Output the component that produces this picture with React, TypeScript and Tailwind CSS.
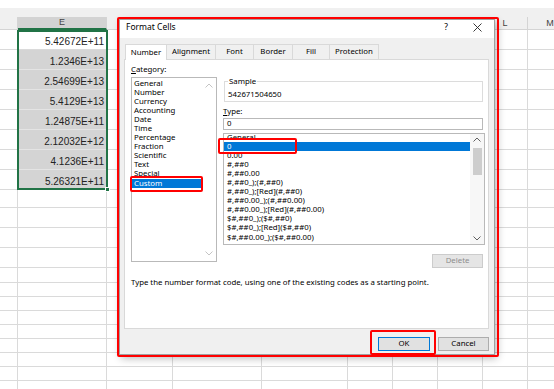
import React from 'react';

const cols = [
  { w: 'w-[18px]', name: '' },
  { w: 'w-[89px]', name: 'E' },
  { w: 'w-[66px]', name: '' },
  { w: 'w-[89px]', name: '' },
  { w: 'w-[86px]', name: '' },
  { w: 'w-[45px]', name: '' },
  { w: 'w-[45px]', name: '' },
  { w: 'w-[45px]', name: '' },
  { w: 'w-[45px]', name: 'L' },
  { w: 'w-[45px]', name: 'M' },
];

const rowHeights = [
  'h-[20px]', 'h-[20px]', 'h-[20px]', 'h-[20px]', 'h-[20px]', 'h-[20px]', 'h-[20px]',
  'h-[20px]', 'h-[18px]', 'h-[20px]', 'h-[20px]', 'h-[20px]', 'h-[15px]', 'h-[14px]',
  'h-[14px]', 'h-[14px]', 'h-[14px]', 'h-[14px]', 'h-[14px]', 'h-[14px]', 'h-[14px]',
];

const values = [
  '5.42672E+11',
  '1.2346E+13',
  '2.54699E+13',
  '5.4129E+13',
  '1.24875E+11',
  '2.12032E+12',
  '4.1236E+11',
  '5.26321E+11',
];

const categories = [
  'General', 'Number', 'Currency', 'Accounting', 'Date', 'Time',
  'Percentage', 'Fraction', 'Scientific', 'Text', 'Special', 'Custom',
];

const formats = [
  'General',
  '0',
  '0.00',
  '#,##0',
  '#,##0.00',
  '#,##0_);(#,##0)',
  '#,##0_);[Red](#,##0)',
  '#,##0.00_);(#,##0.00)',
  '#,##0.00_);[Red](#,##0.00)',
  '$#,##0_);($#,##0)',
  '$#,##0_);[Red]($#,##0)',
  '$#,##0.00_);($#,##0.00)',
];

const tabs = [
  { label: 'Number', w: 'w-[42px]' },
  { label: 'Alignment', w: 'w-[49px]' },
  { label: 'Font', w: 'w-[38px]' },
  { label: 'Border', w: 'w-[39px]' },
  { label: 'Fill', w: 'w-[37px]' },
  { label: 'Protection', w: 'w-[49px]' },
];

const Chevron: React.FC<{ up?: boolean; color: string }> = ({ up, color }) => (
  <svg width="8" height="5" viewBox="0 0 8 5">
    <path
      d={up ? 'M0.5 4.5 L4 1 L7.5 4.5' : 'M0.5 0.5 L4 4 L7.5 0.5'}
      fill="none"
      stroke={color}
      strokeWidth="1"
    />
  </svg>
);

const Sheet = () => (
  <div className="flex flex-col">
    <div className="h-[8px] bg-white" />
    <div className="h-[9px] bg-[#f0f0f0]" />
    <div className="flex h-[13px] bg-[#f0f0f0]">
      {cols.map((c, i) => (
        <div
          key={i}
          className={`${c.w} flex shrink-0 items-center justify-center border-r border-b border-[#d4d4d4] text-[9px] leading-none text-[#444] ${
            i === 1 ? 'bg-[#d3d3d3] !border-b-[#217346] border-b-2' : ''
          }`}
        >
          {c.name}
        </div>
      ))}
    </div>
    {rowHeights.map((h, r) => (
      <div key={r} className={`${h} flex shrink-0`}>
        {cols.map((c, i) => {
          const val = i === 1 ? values[r] : undefined;
          const selected = i === 1 && r > 0 && r < 8;
          return (
            <div
              key={i}
              className={`${c.w} flex shrink-0 items-end justify-end border-r border-b pr-[2px] pb-[2px] text-[10px] leading-none text-[#222] ${
                selected ? 'border-[#e4e4e4] bg-[#d4d4d4]' : 'border-[#dadada] bg-white'
              }`}
            >
              {val}
            </div>
          );
        })}
      </div>
    ))}
  </div>
);

const CategoryList = () => (
  <div className="flex h-[185px] w-[86px] border border-[#b9b9b9] bg-white">
    <div className="flex w-[69px] flex-col pt-[0.5px]">
      {categories.map((c) => (
        <div
          key={c}
          className={`h-[9.1px] pl-[2px] leading-[9.1px] ${
            c === 'Custom' ? 'bg-[#0078d7] text-white' : ''
          }`}
        >
          {c}
        </div>
      ))}
    </div>
    <div className="flex flex-1 flex-col items-center justify-between py-[5px]">
      <Chevron up color="#c4c4c4" />
      <Chevron color="#c4c4c4" />
    </div>
  </div>
);

const FormatList = () => (
  <div className="flex h-[112px] w-[262px] overflow-hidden border border-[#b9b9b9] bg-white">
    <div className="-mt-[1.5px] flex w-[246px] flex-col">
      {formats.map((f, i) => (
        <div
          key={f}
          className={`h-[9.1px] shrink-0 pl-[3px] leading-[9.1px] ${
            i === 1 ? 'bg-[#0078d7] text-white' : ''
          }`}
        >
          {f}
        </div>
      ))}
    </div>
    <div className="flex flex-1 flex-col items-center bg-[#f7f7f7] py-[3px]">
      <Chevron up color="#606060" />
      <div className="mt-[6px] h-[27px] w-[9px] bg-[#cdcdcd]" />
      <div className="flex-1" />
      <Chevron color="#606060" />
    </div>
  </div>
);

const Dialog = () => (
  <div
    className="absolute top-[19px] left-[119px] flex h-[336px] w-[376px] flex-col border border-[#a0a0a0] bg-[#f0f0f0] text-[7.8px] text-black shadow-[2px_3px_8px_rgba(0,0,0,0.3)]"
    style={{ fontFamily: '"Noto Sans", "Liberation Sans", sans-serif' }}
  >
    <div className="flex h-[18px] items-start bg-white pl-[6px] pt-[2px] leading-[9px]">
      <span className="text-[8.5px]">Format Cells</span>
      <div className="flex-1" />
      <span className="mr-[25px] text-[8.5px]">?</span>
      <svg width="9" height="9" viewBox="0 0 9 9" className="mt-[0.5px] mr-[12px]">
        <path d="M0.5 0.5 L8.5 8.5 M8.5 0.5 L0.5 8.5" stroke="#222" strokeWidth="0.9" />
      </svg>
    </div>
    <div className="mt-[6px] ml-[5px] flex h-[15px] items-end">
      {tabs.map((t, i) => (
        <div
          key={t.label}
          className={`${t.w} flex items-center justify-center border-t border-r border-[#d9d9d9] leading-none ${
            i === 0
              ? 'relative z-10 -mb-px h-[16px] border-l bg-white'
              : 'h-[15px] bg-[#f0f0f0]'
          }`}
        >
          {t.label}
        </div>
      ))}
    </div>
    <div className="ml-[4px] flex h-[270px] w-[365px] flex-col border border-[#d9d9d9] bg-white">
      <div className="flex h-[208px] items-start">
        <div className="ml-[6px] flex w-[86px] flex-col pt-[5px]">
          <div className="h-[9px] leading-[9px]">
            <span className="underline">C</span>ategory:
          </div>
          <div className="mt-[3px]">
            <CategoryList />
          </div>
        </div>
        <div className="ml-[6px] flex w-[262px] flex-col">
          <div className="relative mt-[21px] ml-[1px] h-[21px] w-[259px] border border-[#dcdcdc]">
            <span className="absolute -top-[5px] left-[3px] bg-white px-[1px] leading-[9px]">
              Sample
            </span>
            <div className="pt-[8px] pl-[3px] leading-[9px]">542671504650</div>
          </div>
          <div className="mt-[5px] h-[9px] leading-[9px]">
            <span className="underline">T</span>ype:
          </div>
          <div className="mt-[2px] flex h-[12px] w-[260px] items-center border border-[#b9b9b9] pl-[3px] leading-none">
            0
          </div>
          <div className="mt-[3px]">
            <FormatList />
          </div>
          <div className="mt-[9px] mr-[2px] flex h-[14px] w-[51px] items-center justify-center self-end border border-[#cccccc] bg-[#e5e5e5] leading-none text-[#8d8d8d]">
            Delete
          </div>
        </div>
      </div>
      <div className="mt-[10px] ml-[6px] h-[9px] leading-[9px]">
        Type the number format code, using one of the existing codes as a starting point.
      </div>
    </div>
    <div className="mt-[8px] flex justify-end gap-[8px] pr-[5px]">
      <div className="flex h-[14px] w-[52px] items-center justify-center border border-[#0078d7] bg-[#e1e1e1] leading-none">
        OK
      </div>
      <div className="flex h-[14px] w-[51px] items-center justify-center border border-[#adadad] bg-[#e1e1e1] leading-none">
        Cancel
      </div>
    </div>
  </div>
);

const Mark: React.FC<{ className: string }> = ({ className }) => (
  <div className={`absolute rounded-[2px] border-2 border-[#ff0000] ${className}`} />
);

export default function App() {
  return (
    <div
      className="relative h-[389px] w-[554px] overflow-hidden bg-white"
      style={{ fontFamily: '"Liberation Sans", Arial, sans-serif' }}
    >
      <Sheet />
      {/* selection outline on column E */}
      <div className="absolute top-[30px] left-[17px] h-[160px] w-[91px] border-2 border-[#217346]" />
      <div className="absolute top-[187px] left-[105px] h-[5px] w-[5px] border border-white bg-[#217346]" />
      <Dialog />
      <Mark className="top-[17px] left-[117px] h-[340px] w-[382px]" />
      <Mark className="top-[176px] left-[130px] h-[16px] w-[73px]" />
      <Mark className="top-[138px] left-[218px] h-[16px] w-[79px]" />
      <Mark className="top-[330px] left-[370px] h-[25px] w-[66px]" />
    </div>
  );
}
